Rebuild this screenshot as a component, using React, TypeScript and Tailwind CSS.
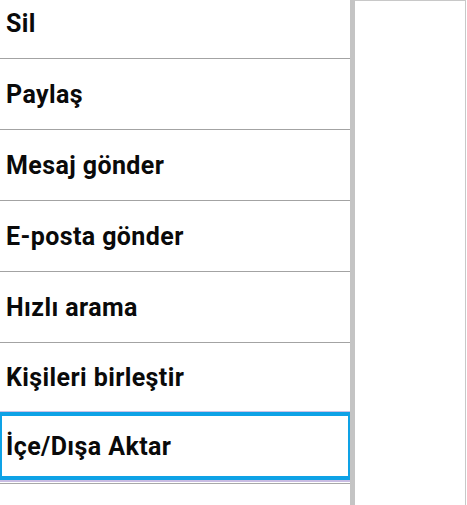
import React from "react";

const items = ["Sil", "Paylaş", "Mesaj gönder", "E-posta gönder", "Hızlı arama"];

export default function App() {
  return (
    <div
      className="flex h-[505px] w-[467px] overflow-hidden bg-white"
      style={{ fontFamily: "Roboto, 'Noto Sans', sans-serif" }}
    >
      <div className="flex w-[350px] flex-col overflow-hidden">
        <div className="-mt-[12px] flex flex-col">
          {items.map((t) => (
            <div
              key={t}
              className="flex h-[71px] shrink-0 items-center border-b border-[#a3a3a3] pl-[6px] pt-[2px] text-[25px] font-bold tracking-[0.4px] text-[#0a0a0a]"
            >
              {t}
            </div>
          ))}
          <div className="flex h-[68px] shrink-0 items-center pl-[6px] pt-[2px] text-[25px] font-bold tracking-[0.4px] text-[#0a0a0a]">
            Kişileri birleştir
          </div>
          <div className="h-px shrink-0 bg-[#cbc2e6]" />
          <div className="flex h-[68px] shrink-0 items-center border-x-2 border-y-4 border-[#0ea2e6] pl-[4px] pt-[2px] text-[25px] font-bold tracking-[0.4px] text-[#0a0a0a]">
            İçe/Dışa Aktar
          </div>
          <div className="h-[2px] shrink-0 bg-[#c9bde3]" />
          <div className="h-px shrink-0 bg-white" />
          <div className="h-px shrink-0 bg-[#a8a8a8]" />
          <div className="h-[71px] shrink-0" />
        </div>
      </div>
      <div className="w-[5px] shrink-0 bg-[#c4c4c4]" />
      <div className="w-[111px] shrink-0 border-t border-r border-[#c8c8c8] bg-white" />
      <div className="w-px shrink-0 bg-white" />
    </div>
  );
}
